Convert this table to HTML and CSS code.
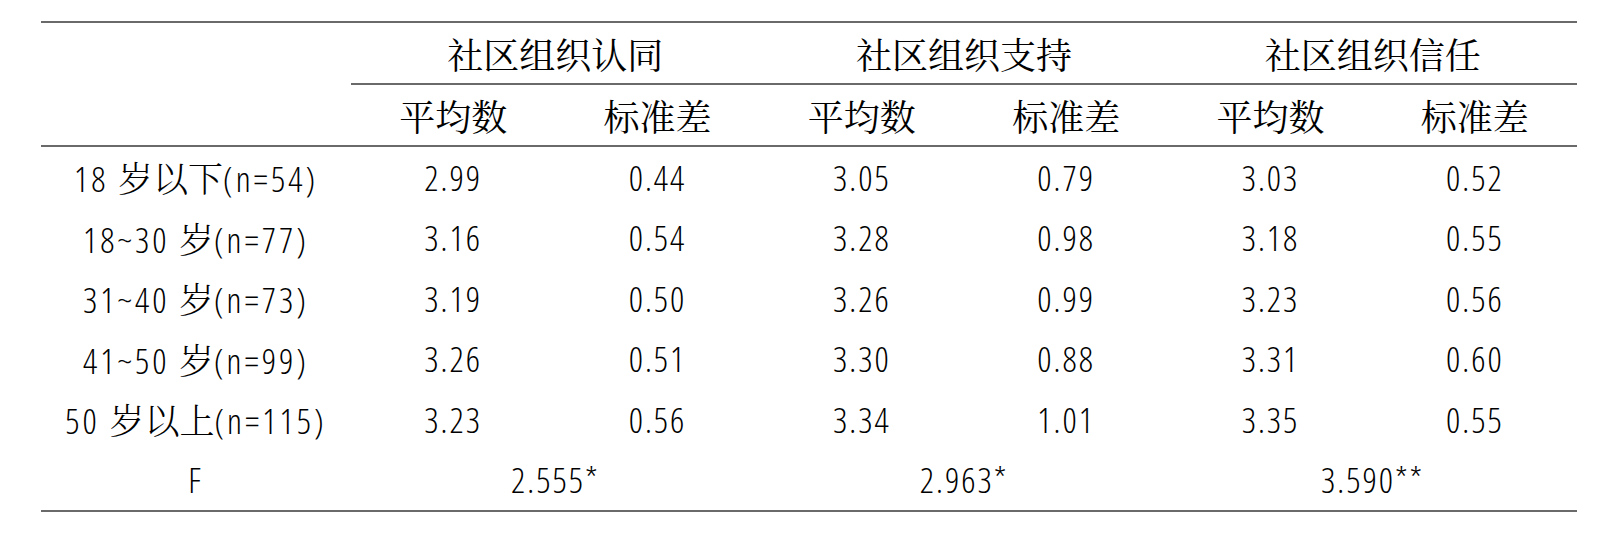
FILE: index.html
```html
<!DOCTYPE html>
<html>
<head>
    <meta charset="UTF-8">
    <title>社区组织认同、支持与信任的年龄差异</title>
    <link rel="stylesheet" href="styles.css">
</head>
<body>
<table class="stats">
    <colgroup>
        <col class="col-label">
        <col span="6" class="col-value">
    </colgroup>
    <thead>
        <tr class="group-row">
            <th></th>
            <th colspan="2" class="group">社区组织认同</th>
            <th colspan="2" class="group">社区组织支持</th>
            <th colspan="2" class="group">社区组织信任</th>
        </tr>
        <tr class="sub-row">
            <th></th>
            <th>平均数</th>
            <th>标准差</th>
            <th>平均数</th>
            <th>标准差</th>
            <th>平均数</th>
            <th>标准差</th>
        </tr>
    </thead>
    <tbody>
        <tr>
            <td class="label">18 <span class="cn">岁以下</span>(n=54)</td>
            <td>2.99</td><td>0.44</td>
            <td>3.05</td><td>0.79</td>
            <td>3.03</td><td>0.52</td>
        </tr>
        <tr>
            <td class="label">18~30 <span class="cn">岁</span>(n=77)</td>
            <td>3.16</td><td>0.54</td>
            <td>3.28</td><td>0.98</td>
            <td>3.18</td><td>0.55</td>
        </tr>
        <tr>
            <td class="label">31~40 <span class="cn">岁</span>(n=73)</td>
            <td>3.19</td><td>0.50</td>
            <td>3.26</td><td>0.99</td>
            <td>3.23</td><td>0.56</td>
        </tr>
        <tr>
            <td class="label">41~50 <span class="cn">岁</span>(n=99)</td>
            <td>3.26</td><td>0.51</td>
            <td>3.30</td><td>0.88</td>
            <td>3.31</td><td>0.60</td>
        </tr>
        <tr>
            <td class="label">50 <span class="cn">岁以上</span>(n=115)</td>
            <td>3.23</td><td>0.56</td>
            <td>3.34</td><td>1.01</td>
            <td>3.35</td><td>0.55</td>
        </tr>
        <tr class="f-row">
            <td class="label">F</td>
            <td colspan="2">2.555*</td>
            <td colspan="2">2.963*</td>
            <td colspan="2">3.590**</td>
        </tr>
    </tbody>
</table>
</body>
</html>
```

FILE: styles.css
```css
html, body {
    margin: 0;
    background: #ffffff;
}

body {
    padding: 21px 0 0 41px;
    color: #000000;
}

.stats {
    width: 1536px;
    border-collapse: collapse;
    table-layout: fixed;
    border-top: 2px solid #6a6a6a;
    border-bottom: 2px solid #6a6a6a;
}

.col-label {
    width: 310px;
}

.stats th,
.stats td {
    padding: 0;
    text-align: center;
    vertical-align: middle;
    white-space: nowrap;
}

.stats th {
    height: 60px;
    font-family: "Noto Serif CJK SC", "Noto Sans CJK SC", serif;
    font-size: 36px;
    font-weight: normal;
}

.stats th.group {
    border-bottom: 2px solid #6a6a6a;
}

.sub-row th {
    border-bottom: 2px solid #6a6a6a;
}

.stats td {
    height: 60.5px;
    font-family: "Open Sans", "Noto Sans CJK SC", sans-serif;
    font-size: 35px;
    font-weight: 350;
    font-stretch: 75%;
    letter-spacing: 2px;
}

.stats td.label {
    letter-spacing: 3px;
}

.stats td .cn {
    font-family: "Noto Serif CJK SC", "Noto Sans CJK SC", serif;
    font-size: 35px;
    font-weight: 300;
    font-stretch: normal;
    letter-spacing: 0;
}
```
